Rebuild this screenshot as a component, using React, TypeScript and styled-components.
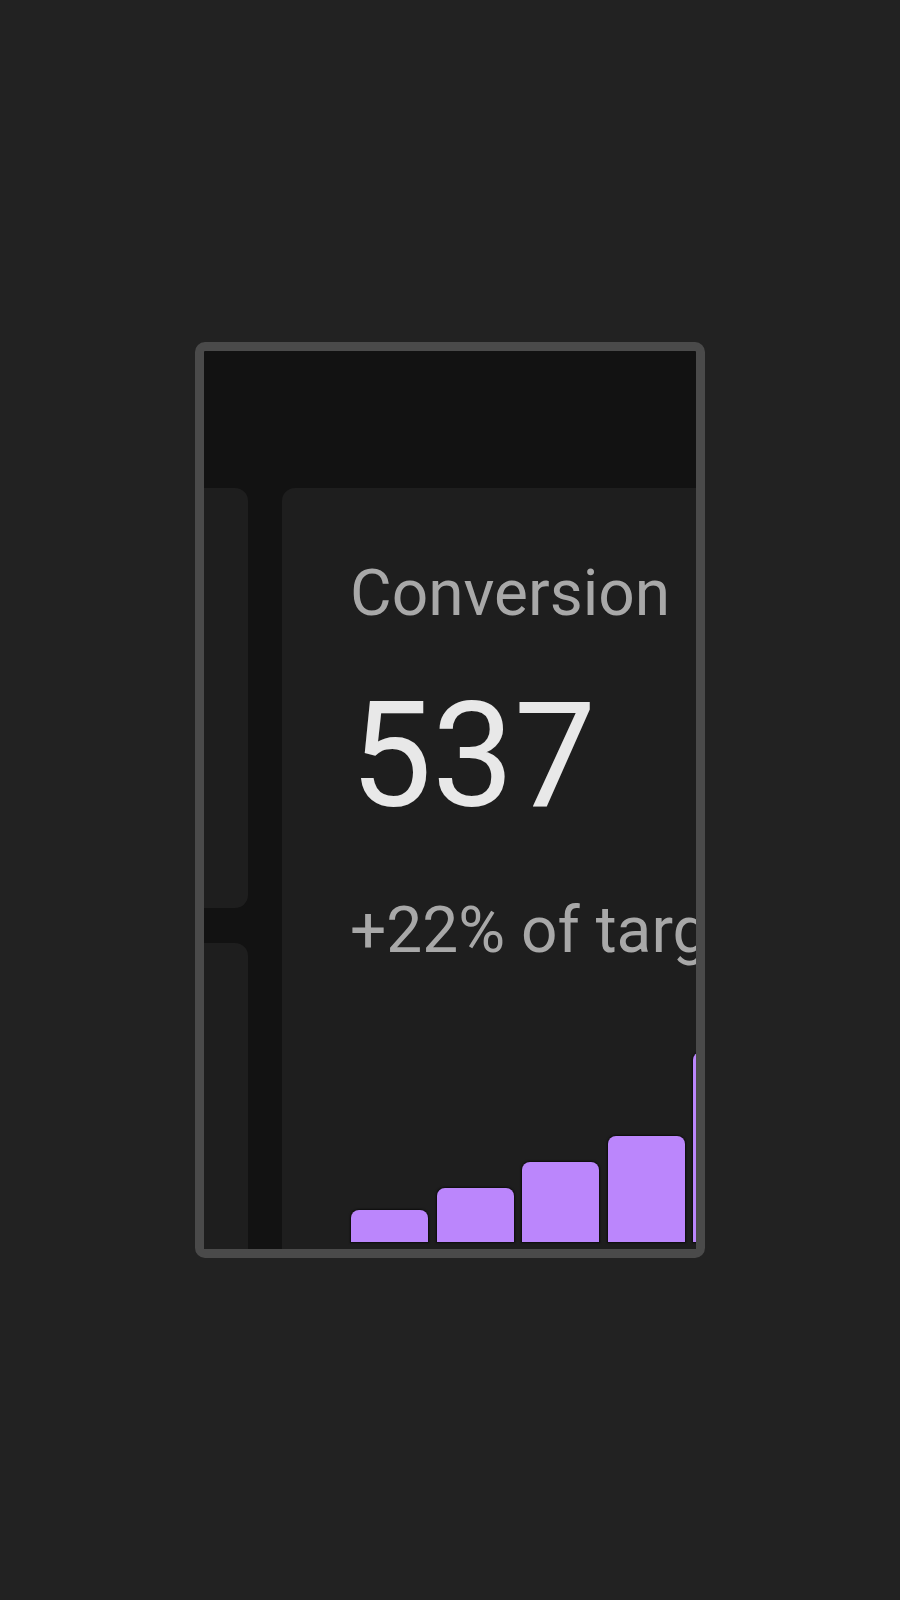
import React from "react";
import styled, { createGlobalStyle } from "styled-components";

const Global = createGlobalStyle`
  html, body {
    margin: 0;
    padding: 0;
    background: #222222;
  }
  body {
    font-family: Roboto, "Noto Sans", "Liberation Sans", sans-serif;
  }
  * { box-sizing: border-box; }
`;

const Stage = styled.div`
  width: 900px;
  height: 1600px;
  display: flex;
  align-items: center;
  justify-content: center;
  background: #222222;
`;

const Lens = styled.div`
  width: 510px;
  height: 916px;
  border: 9px solid #4a4a4a;
  border-radius: 10px;
  background: #121212;
  overflow: hidden;
  padding-top: 137px;
`;

const Board = styled.div`
  display: grid;
  grid-template-columns: 200px 520px;
  gap: 34px;
  margin-left: -156px;
  width: 754px;
  filter: blur(0.5px);
`;

const Column = styled.div`
  display: flex;
  flex-direction: column;
  gap: 35px;
`;

const SideCard = styled.div<{ $h: number }>`
  height: ${(p) => p.$h}px;
  background: #1e1e1e;
  border-radius: 13px;
`;

const MetricCard = styled.div`
  background: #1e1e1e;
  border-radius: 13px;
  padding: 68px 68px 6px 68px;
  display: flex;
  flex-direction: column;
  height: 900px;
`;

const Label = styled.div`
  font-size: 64px;
  line-height: 75px;
  color: #a8a8a8;
  white-space: nowrap;
`;

const Value = styled.div`
  font-size: 146px;
  line-height: 171px;
  color: #e8e8e8;
  margin-top: 40px;
  white-space: nowrap;
`;

const Delta = styled.div`
  font-size: 64px;
  line-height: 75px;
  color: #a8a8a8;
  margin-top: 51px;
  white-space: nowrap;
`;

const Chart = styled.div`
  display: flex;
  align-items: flex-end;
  gap: 8.5px;
  height: 274px;
  margin-left: 1px;
`;

const Bar = styled.div`
  flex: 0 0 77px;
  background: #bb86fc;
  border-radius: 8px 8px 0 0;
  box-shadow: 0 0 2px 1px rgba(0, 0, 0, 0.6);
`;

const bars = [32, 54, 80, 106, 190, 150];

export default function App() {
  return (
    <>
      <Global />
      <Stage>
        <Lens>
          <Board>
            <Column>
              <SideCard $h={420} />
              <SideCard $h={420} />
            </Column>
            <MetricCard>
              <Label>Conversion</Label>
              <Value>537</Value>
              <Delta>+22% of target</Delta>
              <Chart>
                {bars.map((h, i) => (
                  <Bar key={i} style={{ height: `${h}px` }} />
                ))}
              </Chart>
            </MetricCard>
          </Board>
        </Lens>
      </Stage>
    </>
  );
}
